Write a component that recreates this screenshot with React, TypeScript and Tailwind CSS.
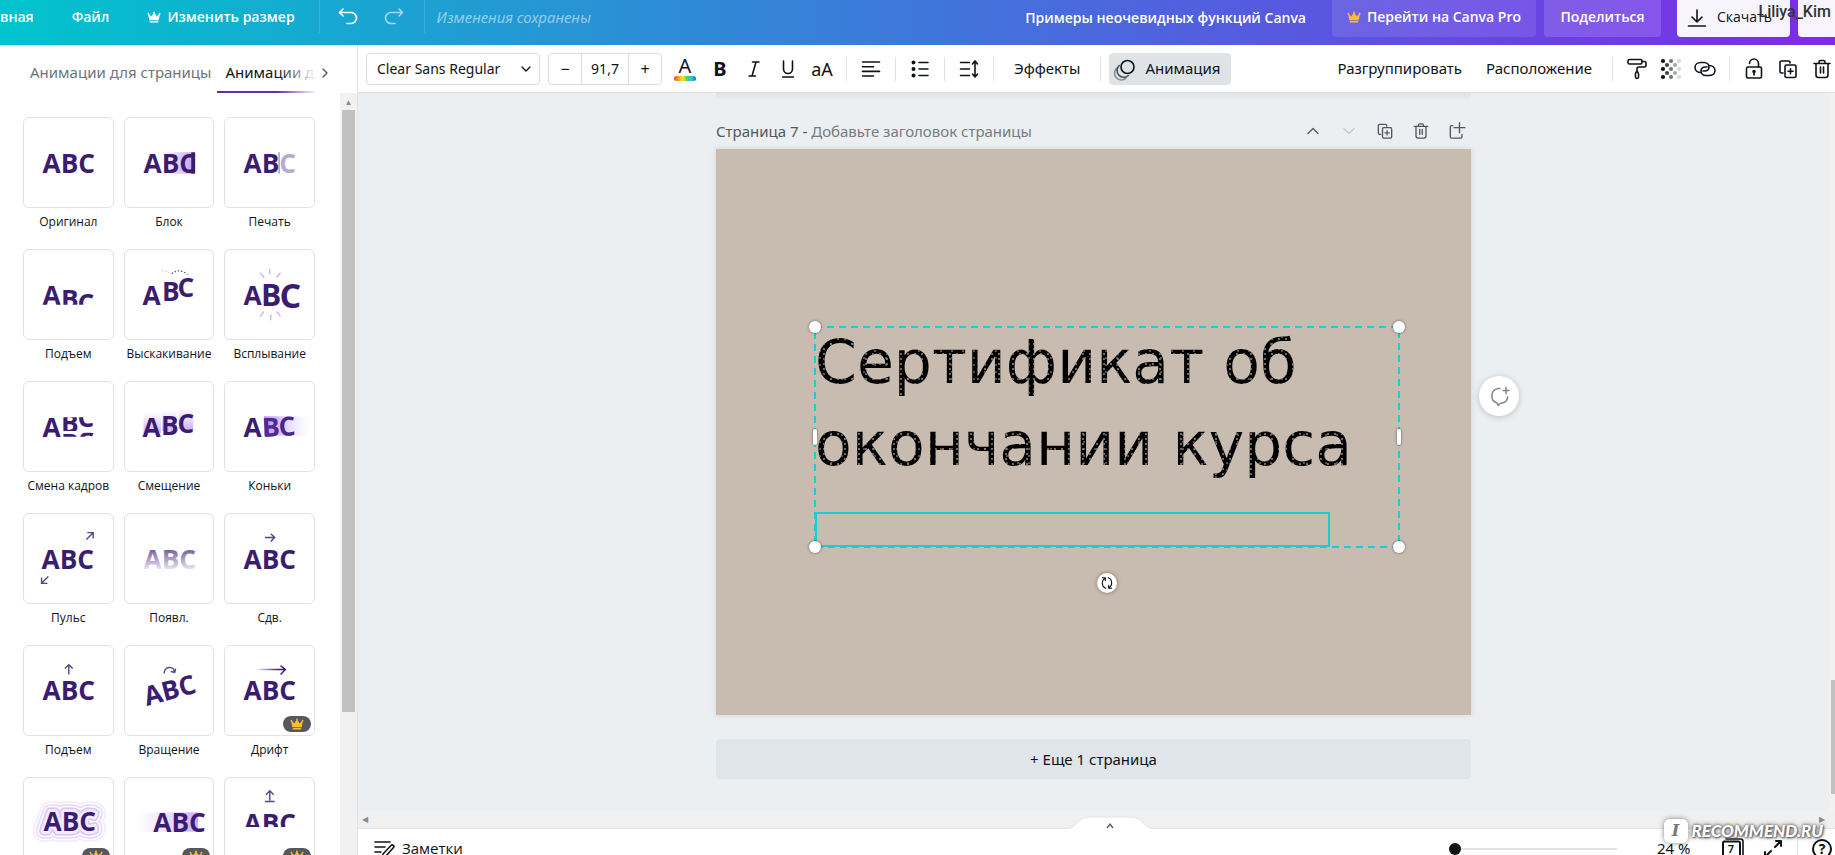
import { useState, type ReactNode } from 'react';
import { ChevronDown, ChevronRight, ChevronUp } from 'lucide-react';

const INK = '#3a1c71';

function Crown({ className }: { className?: string }) {
  return (
    <svg viewBox="0 0 16 16" className={className} fill="currentColor" aria-hidden="true">
      <path d="M2.6 11.6 1.4 5.2a1 1 0 1 1 1-.5l2.5 2.6L7.4 3.5a1 1 0 1 1 1.2 0l2.5 3.8 2.5-2.6a1 1 0 1 1 1 .5l-1.2 6.4z" />
      <rect x="3" y="12.6" width="10" height="1.6" rx="0.8" />
    </svg>
  );
}

function Icon({ children, className = 'h-6 w-6' }: { children: ReactNode; className?: string }) {
  return (
    <svg
      viewBox="0 0 24 24"
      className={className}
      fill="none"
      stroke="currentColor"
      strokeWidth="1.6"
      strokeLinecap="round"
      strokeLinejoin="round"
      aria-hidden="true"
    >
      {children}
    </svg>
  );
}

function CopyIcon() {
  return (
    <Icon>
      <path d="M7 16H5.5A1.5 1.5 0 0 1 4 14.5v-9A1.5 1.5 0 0 1 5.5 4h7A1.5 1.5 0 0 1 14 5.5V6" />
      <rect x="9" y="8" width="11" height="12.5" rx="1.5" />
      <path d="M14.5 11.7v5M12 14.2h5" />
    </Icon>
  );
}

function TrashIcon() {
  return (
    <Icon>
      <path d="M4 6.5h16M9 6V5a1.5 1.5 0 0 1 1.5-1.5h3A1.5 1.5 0 0 1 15 5v1M6 6.5V18a2.5 2.5 0 0 0 2.5 2.5h7A2.5 2.5 0 0 0 18 18V6.5M10.5 10v6M13.5 10v6" />
    </Icon>
  );
}

function Abc({ x = 19, y = 56, size = 27, fill = INK }: { x?: number; y?: number; size?: number; fill?: string }) {
  return (
    <text x={x} y={y} fontSize={size} fill={fill}>
      ABC
    </text>
  );
}

type Animation = { id: string; label: string; pro?: boolean; art: ReactNode };

const animations: Animation[] = [
  { id: 'original', label: 'Оригинал', art: <Abc /> },
  {
    id: 'block',
    label: 'Блок',
    art: (
      <>
        <defs>
          <linearGradient id="block-fade">
            <stop offset="0" stopColor="#c9a7f5" stopOpacity="0" />
            <stop offset="1" stopColor="#c4a0f5" />
          </linearGradient>
        </defs>
        <rect x="38" y="35" width="32" height="22" fill="url(#block-fade)" />
        <Abc />
        <rect x="68" y="35" width="4" height="22" fill={INK} />
      </>
    ),
  },
  {
    id: 'type',
    label: 'Печать',
    art: (
      <>
        <text x="19" y="56" fontSize="27" fill={INK}>
          AB<tspan fill="#b7abcf">C</tspan>
        </text>
        <rect x="55" y="35" width="1" height="22" fill="#7d6aa3" />
      </>
    ),
  },
  {
    id: 'rise',
    label: 'Подъем',
    art: (
      <>
        <clipPath id="rise-clip">
          <rect x="0" y="0" width="91" height="56" />
        </clipPath>
        <g fill={INK} fontSize="27" clipPath="url(#rise-clip)">
          <text x="19" y="56">A</text>
          <text x="38" y="60">B</text>
          <text x="55" y="64">C</text>
        </g>
      </>
    ),
  },
  {
    id: 'pop-out',
    label: 'Выскакивание',
    art: (
      <>
        <g fill={INK} fontSize="27">
          <text x="18" y="56">A</text>
          <text x="38" y="52">B</text>
          <text x="54" y="48">C</text>
        </g>
        <path d="M38 21q5 0 9 4" fill="none" stroke="#d3c8e6" strokeWidth="1.4" strokeDasharray="1.4 2" />
        <path d="M48 24q8-6 16 1" fill="none" stroke="#58418a" strokeWidth="1.4" strokeDasharray="1.4 2" />
      </>
    ),
  },
  {
    id: 'pop-up',
    label: 'Всплывание',
    art: (
      <>
        <g fill={INK}>
          <text x="19" y="56" fontSize="27">A</text>
          <text x="37" y="57" fontSize="31">B</text>
          <text x="56" y="59" fontSize="35">C</text>
        </g>
        <path
          d="m36 23 4 5M46 19v6M57 23l-4 5M36 68l4-5M47 72v-6M57 68l-4-5"
          stroke="#c9b5ee"
          strokeWidth="1.4"
        />
      </>
    ),
  },
  {
    id: 'shuffle',
    label: 'Смена кадров',
    art: (
      <>
        <clipPath id="shuffle-clip">
          <rect x="0" y="36" width="91" height="14" />
        </clipPath>
        <clipPath id="shuffle-low">
          <rect x="0" y="52" width="91" height="4" />
        </clipPath>
        <g fill={INK} fontSize="27">
          <text x="19" y="56">A</text>
          <g clipPath="url(#shuffle-clip)">
            <text x="38" y="52">B</text>
            <text x="55" y="46">C</text>
          </g>
          <g clipPath="url(#shuffle-low)">
            <text x="38" y="73">B</text>
            <text x="55" y="71">C</text>
          </g>
        </g>
      </>
    ),
  },
  {
    id: 'shift',
    label: 'Смещение',
    art: (
      <>
        <defs>
          <linearGradient id="shift-fade" x2="0" y2="1">
            <stop offset="0" stopColor="#d9c6fa" stopOpacity="0" />
            <stop offset="1" stopColor="#cdb2f7" />
          </linearGradient>
        </defs>
        <g fill="url(#shift-fade)">
          <rect x="19" y="30" width="18" height="22" />
          <rect x="38" y="28" width="15" height="22" />
          <rect x="55" y="26" width="15" height="22" />
        </g>
        <g fill={INK} fontSize="27">
          <text x="18" y="56">A</text>
          <text x="37" y="54">B</text>
          <text x="54" y="52">C</text>
        </g>
      </>
    ),
  },
  {
    id: 'skate',
    label: 'Коньки',
    art: (
      <>
        <defs>
          <linearGradient id="skate-fade">
            <stop offset="0" stopColor="#b592ec" />
            <stop offset="1" stopColor="#d9c6fa" stopOpacity="0" />
          </linearGradient>
        </defs>
        <rect x="40" y="35" width="46" height="20" fill="url(#skate-fade)" />
        <g fontSize="27">
          <text x="19" y="56" fill={INK}>A</text>
          <text x="38" y="56" fill="#502a96" transform="rotate(-4 45 46)">B</text>
          <text x="55" y="55" fill="#4a2689" transform="rotate(-4 62 45)">C</text>
        </g>
      </>
    ),
  },
  {
    id: 'pulse',
    label: 'Пульс',
    art: (
      <>
        <Abc x={18} />
        <path d="m64 26 7-7m-6 0h6v6M25 64l-7 7m6 0h-6v-6" fill="none" stroke="#58418a" strokeWidth="1.4" />
      </>
    ),
  },
  {
    id: 'fade',
    label: 'Появл.',
    art: (
      <>
        <defs>
          <linearGradient id="fade-in" gradientUnits="userSpaceOnUse" x1="0" x2="0" y1="36" y2="56">
            <stop offset="0" stopColor="#725c9d" />
            <stop offset="1" stopColor="#e6e0f0" />
          </linearGradient>
        </defs>
        <Abc fill="url(#fade-in)" />
      </>
    ),
  },
  {
    id: 'pan',
    label: 'Сдв.',
    art: (
      <>
        <Abc />
        <path d="M41 24h10m-4-4 4 4-4 4" fill="none" stroke="#58418a" strokeWidth="1.4" />
      </>
    ),
  },
  {
    id: 'lift',
    label: 'Подъем',
    art: (
      <>
        <Abc y={55} />
        <path d="M46 29V19m-4 4 4-4 4 4" fill="none" stroke="#58418a" strokeWidth="1.4" />
      </>
    ),
  },
  {
    id: 'rotate',
    label: 'Вращение',
    art: (
      <>
        <g transform="rotate(-15 45 46)">
          <Abc y={55} />
        </g>
        <path d="M40 28q1-7 7-6 3 0 4 5m-4-1 4 1 1-4" fill="none" stroke="#58418a" strokeWidth="1.4" />
      </>
    ),
  },
  {
    id: 'drift',
    label: 'Дрифт',
    pro: true,
    art: (
      <>
        <defs>
          <linearGradient id="drift-line" gradientUnits="userSpaceOnUse" x1="31" x2="55" y1="24" y2="24">
            <stop offset="0" stopColor={INK} stopOpacity="0" />
            <stop offset="1" stopColor={INK} />
          </linearGradient>
        </defs>
        <Abc y={55} />
        <path d="M31 24h31m-5-4 5 4-5 5" fill="none" stroke="url(#drift-line)" strokeWidth="1.4" />
      </>
    ),
  },
  {
    id: 'neon',
    label: 'Неон',
    pro: true,
    art: (
      <>
        <g fill="none" strokeLinejoin="round" fontSize="27">
          <text x="20" y="54" stroke="#f1eafd" strokeWidth="22">ABC</text>
          <text x="20" y="54" stroke="#ffffff" strokeWidth="19">ABC</text>
          <text x="20" y="54" stroke="#e6daf8" strokeWidth="16">ABC</text>
          <text x="20" y="54" stroke="#fbf8ff" strokeWidth="13">ABC</text>
          <text x="20" y="54" stroke="#d8c4f6" strokeWidth="9">ABC</text>
          <text x="20" y="54" stroke="#f3ebff" strokeWidth="6">ABC</text>
        </g>
        <Abc x={20} y={54} />
      </>
    ),
  },
  {
    id: 'blur',
    label: 'Размытие',
    pro: true,
    art: (
      <>
        <defs>
          <linearGradient id="blur-fade">
            <stop offset="0" stopColor="#e4d8fb" stopOpacity="0" />
            <stop offset="1" stopColor="#c9adf5" />
          </linearGradient>
        </defs>
        <rect x="10" y="35" width="65" height="20" fill="url(#blur-fade)" />
        <Abc x={29} y={55} />
      </>
    ),
  },
  {
    id: 'ascend',
    label: 'Восход',
    pro: true,
    art: (
      <>
        <clipPath id="ascend-clip">
          <rect x="0" y="35" width="91" height="15" />
        </clipPath>
        <g clipPath="url(#ascend-clip)">
          <Abc />
        </g>
        <path d="M46 23V13m-4 4 4-4 4 4M41 24h10" fill="none" stroke="#58418a" strokeWidth="1.4" />
      </>
    ),
  },
];

function AnimationTile({ item }: { item: Animation }) {
  return (
    <button className="flex h-[132px] flex-col items-center text-xs text-[#0e1318]">
      <span className="relative block h-[91px] w-full rounded-md border border-[#dfe1e4]">
        <svg
          viewBox="0 0 91 91"
          className="h-full w-full"
          fontFamily="'Open Sans', sans-serif"
          fontWeight="700"
          aria-hidden="true"
        >
          {item.art}
        </svg>
        {item.pro && (
          <span className="absolute right-[3px] bottom-[3px] flex h-4 w-7 items-center justify-center rounded-full bg-[#55585c] text-[#fdbc2f]">
            <Crown className="h-3.5 w-3.5" />
          </span>
        )}
      </span>
      <span className="mt-1 font-['Open_Sans',sans-serif] leading-5 whitespace-nowrap">{item.label}</span>
    </button>
  );
}

function Header() {
  return (
    <header className="flex h-[45px] shrink-0 items-start overflow-hidden bg-[linear-gradient(90deg,#00c4cc,#7d2ae8)] font-['Open_Sans',sans-serif] text-sm leading-[34px] font-semibold whitespace-nowrap text-white">
      <button>вная</button>
      <button className="ml-[38px]">Файл</button>
      <button className="ml-[38px] flex items-center gap-1.5">
        <Crown className="h-3.5 w-3.5" />
        Изменить размер
      </button>
      <div className="ml-6 h-[33px] w-px bg-white/15" />
      <button className="ml-4 flex h-[34px] items-center" aria-label="Отменить">
        <Icon>
          <path d="M7 4 3.5 7.5 7 11M4 7.5h11a5 5 0 0 1 0 11h-4" />
        </Icon>
      </button>
      <button className="ml-[22px] flex h-[34px] items-center text-white/60" aria-label="Повторить">
        <Icon>
          <path d="m17 4 3.5 3.5L17 11m3-3.5H9a5 5 0 0 0 0 11h4" />
        </Icon>
      </button>
      <div className="ml-[18px] h-[33px] w-px bg-white/15" />
      <span className="ml-3 font-['Noto_Sans',sans-serif] text-[15px] font-normal text-white/50 italic">
        Изменения сохранены
      </span>

      <div className="ml-auto flex">
        <span className="mr-[26px] leading-9">Примеры неочевидных функций Canva</span>
        <button className="mr-2 flex h-[37px] w-[204px] items-start justify-center gap-1.5 rounded-b bg-white/10">
          <Crown className="mt-2.5 h-3.5 w-3.5 text-[#fdbc2f]" />
          Перейти на Canva Pro
        </button>
        <button className="mr-4 h-[37px] w-[117px] rounded-b bg-white/15 leading-[34px]">
          <span className="block h-full">Поделиться</span>
        </button>
        <button className="mr-2 flex h-[37px] w-[113px] gap-2 rounded-b bg-white/95 pl-2 font-normal text-[#0e1318]">
          <Icon className="mt-1.5 h-6 w-6">
            <path d="M12 4v12m-5-5 5 5 5-5M3.5 20h17" />
          </Icon>
          Скачать
        </button>
        <button className="h-[37px] w-[37px] rounded-bl bg-white/95" aria-label="Ещё" />
      </div>
    </header>
  );
}

function Sidebar() {
  return (
    <aside className="flex w-[358px] shrink-0 flex-col border-r border-[#dfe1e4] bg-white">
      <div className="flex h-12 shrink-0 items-stretch pl-[30px] text-[15px] whitespace-nowrap" role="tablist">
        <button role="tab" aria-selected="false" className="pt-[17px] pb-[11px] leading-5 text-[#6f747a]">
          Анимации для страницы
        </button>
        <div className="relative ml-1.5 w-[100px] overflow-hidden">
          <button
            role="tab"
            aria-selected="true"
            className="h-full border-b-2 border-[#612dae] pt-[17px] pb-[9px] pl-2 leading-5 text-[#0e1318]"
          >
            Анимации для текста
          </button>
          <div className="absolute inset-y-0 right-0 w-10 bg-linear-to-r from-transparent to-white" />
        </div>
        <button className="pt-2" aria-label="Вперёд">
          <ChevronRight className="h-4 w-4 text-[#54585d]" />
        </button>
      </div>
      <div className="flex min-h-0 flex-1">
        <div className="min-w-0 flex-1 overflow-hidden pt-6 pr-[25px] pl-[23px]">
          <div className="grid grid-cols-3 gap-x-[10px]">
            {animations.map((item) => (
              <AnimationTile key={item.id} item={item} />
            ))}
          </div>
        </div>
        <div className="flex w-[17px] flex-col items-center bg-[#f1f1f1]">
          <div className="flex h-[17px] items-center text-[8px] text-[#8b8b8b]">▲</div>
          <div className="h-[79%] w-[13px] bg-[#c1c1c1]" />
        </div>
      </div>
    </aside>
  );
}

function Divider({ className = '' }: { className?: string }) {
  return <div className={`h-6 w-px shrink-0 bg-[#dfe1e4] ${className}`} />;
}

function Toolbar() {
  const [size, setSize] = useState('91,7');

  return (
    <div className="relative z-10 flex h-12 shrink-0 items-center overflow-hidden border-b border-[#dcdfe3] bg-white pl-2 text-[15px] whitespace-nowrap text-[#0e1318]">
      <div className="relative h-8 w-[174px]">
        <select
          aria-label="Шрифт"
          className="h-full w-full appearance-none rounded border border-[#d9dce0] bg-white pl-2.5 text-sm"
        >
          <option>Clear Sans Regular</option>
        </select>
        <ChevronDown className="pointer-events-none absolute top-2 right-1.5 h-4 w-4" />
      </div>
      <div className="ml-2 flex h-8 w-[114px] rounded border border-[#d9dce0]">
        <button className="w-8 text-base" aria-label="Уменьшить">
          −
        </button>
        <input
          aria-label="Размер шрифта"
          value={size}
          onChange={(e) => setSize(e.target.value)}
          className="w-12 min-w-0 border-x border-[#d9dce0] text-center text-sm outline-none"
        />
        <button className="flex-1 text-base" aria-label="Увеличить">
          +
        </button>
      </div>

      <button className="ml-3 flex w-[22px] flex-col items-center" aria-label="Цвет текста">
        <span className="h-[18px] text-xl leading-[18px]">A</span>
        <span className="mt-px h-[5px] w-full rounded-full bg-[linear-gradient(90deg,#e8452c,#f7a31b,#f5ea29,#43d65c,#2fc6e8,#2b62e0)]" />
      </button>
      <button className="ml-3 w-6 text-xl font-bold" aria-label="Полужирный">
        B
      </button>
      <button className="ml-2.5 flex w-6 justify-center" aria-label="Курсив">
        <Icon>
          <path d="M10.5 5H17M7 19h6.5M14 5l-4 14" />
        </Icon>
      </button>
      <button className="ml-2.5 flex w-6 justify-center" aria-label="Подчёркнутый">
        <Icon>
          <path d="M7.5 4v8a4.5 4.5 0 0 0 9 0V4M6.5 20h11" />
        </Icon>
      </button>
      <button className="ml-2.5 w-6 text-lg" aria-label="Регистр">
        aA
      </button>
      <Divider className="ml-3" />
      <button className="ml-3" aria-label="Выравнивание">
        <Icon>
          <path d="M3.5 5h17M3.5 9.7h11M3.5 14.4h17M3.5 19h11" />
        </Icon>
      </button>
      <Divider className="ml-3" />
      <button className="ml-3" aria-label="Список">
        <Icon>
          <path d="M11 5.5h9M11 12h9M11 18.5h9" />
          <g fill="currentColor" stroke="none">
            <circle cx="5.5" cy="5.5" r="2" />
            <circle cx="5.5" cy="12" r="2" />
            <circle cx="5.5" cy="18.5" r="2" />
          </g>
        </Icon>
      </button>
      <Divider className="ml-3" />
      <button className="ml-3" aria-label="Интервал">
        <Icon>
          <path d="M3.5 5.5h9M3.5 12h9M3.5 18.5h9M18 4v16m-2.5-13L18 4l2.5 3M15.5 17l2.5 3 2.5-3" />
        </Icon>
      </button>
      <Divider className="ml-3" />
      <button className="ml-5">Эффекты</button>
      <Divider className="ml-5" />
      <button className="ml-2 flex h-8 w-[122px] items-center gap-2 rounded bg-[#dfe3e6] pl-1">
        <Icon>
          <circle cx="14.5" cy="10" r="6.5" />
          <path opacity="0.7" d="M6.2 8.5a6.5 6.5 0 0 0 9.3 10" />
          <path opacity="0.4" d="M3.8 11a6.5 6.5 0 0 0 9.2 10.2" />
        </Icon>
        Анимация
      </button>

      <div className="ml-auto flex shrink-0 items-center pr-px">
        <button>Разгруппировать</button>
        <button className="ml-6">Расположение</button>
        <Divider className="ml-5" />
        <button className="ml-3" aria-label="Копировать стиль">
          <Icon>
            <rect x="3" y="2.5" width="14" height="4.5" rx="1.5" />
            <path d="M17 4.5h2.5A1.5 1.5 0 0 1 21 6v2.5A1.5 1.5 0 0 1 19.5 10H14a2 2 0 0 0-2 2v2.5" />
            <path d="M12 14.5c-2 1-1.8 3-1.5 5.5.2 2 2.8 2 3 0 .3-2.5.5-4.5-1.5-5.5z" />
          </Icon>
        </button>
        <button className="ml-2.5" aria-label="Прозрачность">
          <svg viewBox="0 0 24 24" className="h-6 w-6" aria-hidden="true">
            {[0, 1, 2, 3, 4].map((col) =>
              [0, 1, 2, 3, 4]
                .filter((row) => (row + col) % 2 === 0)
                .map((row) => (
                  <circle
                    key={`${col}-${row}`}
                    cx={4 + col * 4}
                    cy={4 + row * 4}
                    r="2.1"
                    fill="#0e1318"
                    opacity={1 - col * 0.21}
                  />
                ))
            )}
          </svg>
        </button>
        <button className="ml-2.5" aria-label="Ссылка">
          <Icon>
            <path d="M8 15.5c-3.5 0-6-2.2-6-5s2.5-5 6-5h3c3 0 5 2 5 4.5s-2 4-4.5 4H10" />
            <path d="M16 8.5c3.5 0 6 2.2 6 5s-2.5 5-6 5h-3c-3 0-5-2-5-4.5s2-4 4.500-4H14" />
          </Icon>
        </button>
        <Divider className="ml-3" />
        <button className="ml-3" aria-label="Заблокировать">
          <Icon>
            <rect x="4.5" y="10" width="15" height="11" rx="1.5" />
            <path d="M7.5 6.5a4.5 4.5 0 0 1 9 0V10M12 14v4" />
            <circle cx="12" cy="14.5" r="1" fill="currentColor" />
          </Icon>
        </button>
        <button className="ml-2.5" aria-label="Дублировать">
          <CopyIcon />
        </button>
        <button className="ml-2.5" aria-label="Удалить">
          <TrashIcon />
        </button>
      </div>
    </div>
  );
}

function Selection() {
  const knob = 'absolute h-3 w-3 rounded-full bg-white shadow-[0_0_3px_rgba(0,0,0,0.5)]';
  const grip = 'absolute top-1/2 h-4 w-1 -translate-y-1/2 rounded-full bg-white shadow-[0_0_3px_rgba(0,0,0,0.5)]';

  return (
    <div className="absolute top-[178px] left-[99px] h-[220px] w-[584px]">
      <svg className="absolute inset-0 h-full w-full overflow-visible" aria-hidden="true">
        <rect width="100%" height="100%" fill="none" stroke="#18cdd5" strokeWidth="2" strokeDasharray="7 5" />
      </svg>
      <div className="absolute bottom-0 left-0 h-[35px] w-[515px] border-2 border-[#18cdd5]" />
      <div className={`${knob} -top-1.5 -left-1.5`} />
      <div className={`${knob} -top-1.5 -right-1.5`} />
      <div className={`${knob} -bottom-1.5 -left-1.5`} />
      <div className={`${knob} -right-1.5 -bottom-1.5`} />
      <div className={`${grip} -left-0.5`} />
      <div className={`${grip} -right-0.5`} />
      <button
        aria-label="Повернуть"
        className="absolute -bottom-[46px] left-1/2 flex h-5 w-5 -translate-x-1/2 items-center justify-center rounded-full bg-white text-[#0e1318] shadow-[0_0_4px_rgba(0,0,0,0.4)]"
      >
        <Icon className="h-4 w-4">
          <path d="M10 20c-6-2-7-11-1-15.5M5 4h4.5v4.5M14 4c6 2 7 11 1 15.5M19 20h-4.5v-4.5" />
        </Icon>
      </button>
    </div>
  );
}

function Canvas() {
  return (
    <div className="flex min-h-0 flex-1 overflow-hidden bg-[#ebeff2]">
      <div className="flex flex-1 flex-col items-center">
        <div className="h-2 w-[755px] shrink-0 bg-linear-to-b from-[#dfe3e6] to-[#ebeff2]" />
        <div className="mt-3.5 flex h-[34px] w-[755px] shrink-0 items-center pb-0.5 text-[#54585d]">
          <p className="text-[15px]">
            Страница 7 - <span className="text-[#777c81]">Добавьте заголовок страницы</span>
          </p>
          <div className="ml-auto flex items-center gap-4">
            <button aria-label="Вверх" className="flex w-5 justify-center">
              <ChevronUp className="h-5 w-5" strokeWidth={1.5} />
            </button>
            <button aria-label="Вниз" className="flex w-5 justify-center text-[#c3c7cb]">
              <ChevronDown className="h-5 w-5" strokeWidth={1.5} />
            </button>
            <button aria-label="Дублировать страницу" className="[&_svg]:h-5 [&_svg]:w-5">
              <CopyIcon />
            </button>
            <button aria-label="Удалить страницу" className="[&_svg]:h-5 [&_svg]:w-5">
              <TrashIcon />
            </button>
            <button aria-label="Добавить страницу" className="pr-1">
              <Icon className="h-5 w-5">
                <path d="M7 5.5H5.5A1.5 1.5 0 0 0 4 7v12a1.5 1.5 0 0 0 1.5 1.500h11A1.500 1.500 0 0 0 18 19v-3M15 2v12M8.500 8h13" />
              </Icon>
            </button>
          </div>
        </div>

        <div className="relative h-[566px] w-[755px] shrink-0 bg-[#c8bcb0] pt-[172px] pl-[99px] shadow-[0_0_6px_rgba(60,70,80,0.15)]">
          <p className="bg-[radial-gradient(circle_at_2px_3px,#8d857d_0.6px,transparent_1.1px),radial-gradient(circle_at_5px_2px,#8d857d_0.5px,transparent_1px),linear-gradient(#000,#000)] bg-[length:7px_5px,11px_7px,auto] bg-clip-text font-['DejaVu_Sans',sans-serif] text-[60px] leading-[82px] whitespace-nowrap text-transparent">
            Сертификат об
            <br />
            окончании курса
          </p>
          <Selection />
          <button
            aria-label="Добавить комментарий"
            className="absolute top-[227px] -right-12 flex h-10 w-10 items-center justify-center rounded-full bg-white text-[#85898d] shadow-[0_1px_6px_rgba(0,0,0,0.2)]"
          >
            <Icon>
              <path d="M13 4.5h-2a7.5 7.5 0 0 0-1 14.5l1.2 2.5 2.3-2.3c4.5 0 7-2.8 7.2-6.2M19 3.5v6M16 6.5h6" />
            </Icon>
          </button>
        </div>

        <button className="mt-6 h-10 w-[755px] shrink-0 rounded bg-[#e0e5e9] text-[15px] text-[#0e1318]">
          + Еще 1 страница
        </button>
      </div>
      <div className="relative w-1.5 bg-[#f1f1f1]">
        <div className="absolute bottom-4 left-0.5 h-[114px] w-1 bg-[#c1c1c1]" />
      </div>
    </div>
  );
}

function BottomBar() {
  const [zoom, setZoom] = useState(0);

  return (
    <div className="relative shrink-0">
      <div className="flex h-[18px] items-center justify-between bg-[#f0f0f0] pr-2.5 pl-1 text-[8px] text-[#8b8b8b]">
        <span>◀</span>
        <span>▶</span>
      </div>
      <button aria-label="Показать страницы" className="absolute top-1.5 left-[706px] text-[#54585d]">
        <svg viewBox="0 0 92 14" className="h-3.5 w-[92px]" aria-hidden="true">
          <path d="M0 13C14 13 12 1 26 1h40c14 0 12 12 26 12v1H0z" fill="#fff" stroke="#e2e4e7" />
          <path d="M0 14h92" stroke="#fff" strokeWidth="2" />
          <path d="m43 12 3-4 3 4" fill="none" stroke="currentColor" strokeWidth="1.3" />
        </svg>
      </button>
      <div className="flex h-[27px] items-start overflow-hidden border-t border-[#e2e4e7] bg-white pl-3.5 text-sm text-[#0e1318]">
        <button className="flex h-10 items-center gap-1.5">
          <Icon>
            <path d="M3 5h15M3 10h10M3 15h6M3 20h3" />
            <path d="m10 21 1-4L19 8.5a1.5 1.5 0 0 1 2.5 2L14 19z" />
          </Icon>
          <span className="font-['Open_Sans',sans-serif] text-[15px]">Заметки</span>
        </button>
        <div className="ml-auto flex h-10 shrink-0 items-center">
          <input
            type="range"
            aria-label="Масштаб"
            min={0}
            max={100}
            value={zoom}
            onChange={(e) => setZoom(Number(e.target.value))}
            className="h-3 w-[168px] appearance-none bg-[linear-gradient(#dfe1e4,#dfe1e4)] bg-[length:100%_2px] bg-center bg-no-repeat [&::-webkit-slider-thumb]:h-3 [&::-webkit-slider-thumb]:w-3 [&::-webkit-slider-thumb]:appearance-none [&::-webkit-slider-thumb]:rounded-full [&::-webkit-slider-thumb]:bg-[#0e1318]"
          />
          <span className="ml-10 w-12 text-[15px]">24 %</span>
          <button className="relative ml-4 h-10 w-6" aria-label="Страницы">
            <Icon>
              <path d="M5 2h14.5A2.5 2.5 0 0 1 22 4.5V20" />
              <rect x="2" y="4.5" width="17" height="18" rx="1.5" strokeWidth="2" />
            </Icon>
            <span className="absolute inset-x-0 top-2.5 pr-1 text-center text-[11px] leading-5 font-semibold">7</span>
          </button>
          <button className="ml-4" aria-label="Во весь экран">
            <Icon>
              <path d="m14 10 6-6m-5 0h5v5M10 14l-6 6m5 0H4v-5" strokeWidth="2" />
            </Icon>
          </button>
          <Divider className="ml-3" />
          <button className="mr-[3px] ml-3.5 flex h-5 w-5 items-center justify-center rounded-full border-2 border-[#0e1318] text-sm font-bold">
            ?
          </button>
        </div>
      </div>
    </div>
  );
}

function Watermark() {
  return (
    <>
      <span className="absolute top-0 right-1 z-20 font-['Roboto',sans-serif] text-base leading-6 font-medium text-[#333]">
        Liliya_Kim
      </span>
      <div className="absolute right-3 bottom-3 z-20 flex items-center gap-1 text-white">
        <span className="flex h-6 w-6 items-center justify-center rounded-md bg-white/90 font-['DejaVu_Serif',serif] text-base font-bold text-[#777] italic shadow-[0_0_5px_rgba(0,0,0,0.5)]">
          I
        </span>
        <span className="font-['Lato',sans-serif] text-[17px] leading-6 font-black italic [text-shadow:0_0_3px_#555,0_0_5px_#777,1px_1px_2px_#666]">
          RECOMMEND.RU
        </span>
      </div>
    </>
  );
}

export default function App() {
  return (
    <div className="relative flex h-screen flex-col overflow-hidden bg-white font-['Noto_Sans','Open_Sans',sans-serif]">
      <Header />
      <div className="flex min-h-0 flex-1">
        <Sidebar />
        <main className="flex min-w-0 flex-1 flex-col">
          <Toolbar />
          <Canvas />
          <BottomBar />
        </main>
      </div>
      <Watermark />
    </div>
  );
}
